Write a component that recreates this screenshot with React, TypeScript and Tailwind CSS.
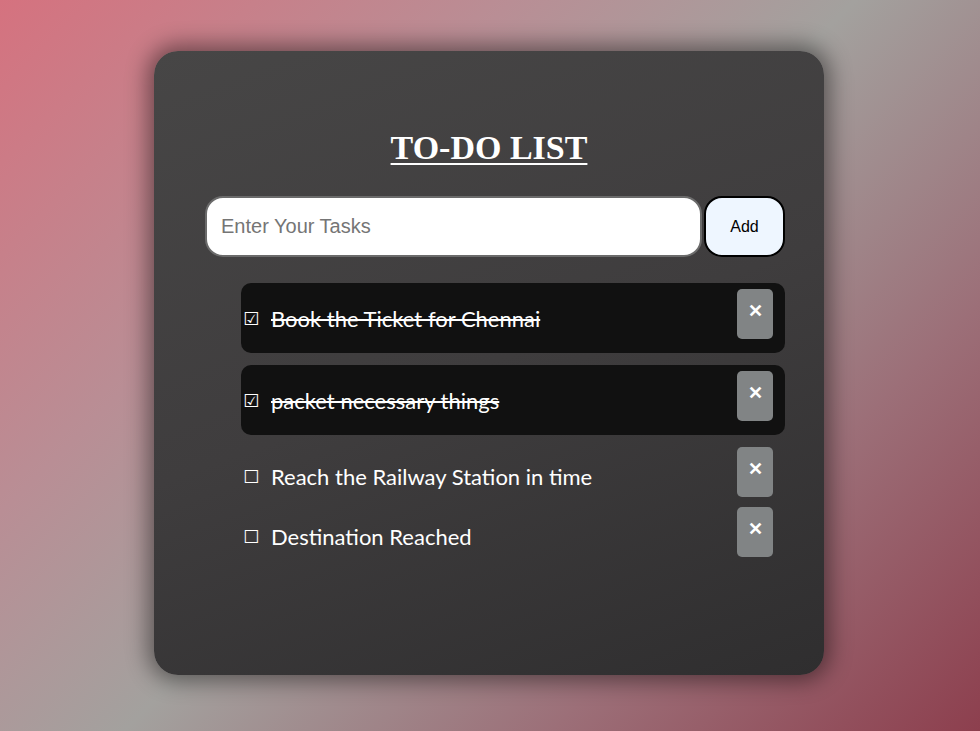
import { useState } from 'react';

interface Task {
  id: number;
  text: string;
  done: boolean;
}

const initialTasks: Task[] = [
  { id: 1, text: 'Book the Ticket for Chennai', done: true },
  { id: 2, text: 'packet necessary things', done: true },
  { id: 3, text: 'Reach the Railway Station in time', done: false },
  { id: 4, text: 'Destination Reached', done: false },
];

export default function App() {
  const [tasks, setTasks] = useState<Task[]>(initialTasks);
  const [value, setValue] = useState('');

  const addTask = () => {
    if (!value.trim()) return;
    setTasks([...tasks, { id: Date.now(), text: value.trim(), done: false }]);
    setValue('');
  };

  const toggle = (id: number) =>
    setTasks(tasks.map((t) => (t.id === id ? { ...t, done: !t.done } : t)));

  const remove = (id: number) => setTasks(tasks.filter((t) => t.id !== id));

  return (
    <div className="h-[731px] w-full overflow-hidden bg-[linear-gradient(135deg,#d5727f_0%,#b98e95_30%,#a3a19e_50%,#9c6f78_75%,#8d3f4e_100%)] pt-[51px]">
      <div className="ml-[154px] h-[624px] w-[670px] rounded-[24px] bg-[linear-gradient(160deg,#474646_0%,#3f3d3e_50%,#2f2e2f_100%)] px-[51px] pt-[78px] shadow-[0_0_22px_6px_rgba(0,0,0,0.45)]">
        {/* Header */}
        <h1 className="text-center font-['Liberation_Serif',serif] text-[34px] font-bold leading-[38px] text-white underline decoration-2 underline-offset-[4px]">
          TO-DO LIST
        </h1>

        {/* Input row */}
        <div className="mt-[29px] flex w-[580px] gap-[2px]">
          <input
            value={value}
            onChange={(e) => setValue(e.target.value)}
            placeholder="Enter Your Tasks"
            className="h-[61px] w-[497px] rounded-[18px] border-2 border-[#6b6b6b] bg-white px-[14px] font-['Liberation_Sans',Arial,sans-serif] text-[20px] text-black outline-none placeholder:text-[#757575]"
          />
          <button
            onClick={addTask}
            className="h-[61px] w-[81px] rounded-[18px] border-2 border-black bg-[#eef6ff] font-['Liberation_Sans',Arial,sans-serif] text-[16px] text-black"
          >
            Add
          </button>
        </div>

        {/* Tasks */}
        <ul className="mt-[26px] w-[580px] pl-[36px]">
          {tasks.map((t) => (
            <li
              key={t.id}
              className={
                t.done
                  ? 'mb-[12px] flex items-start justify-between rounded-[10px] bg-[#111111] pb-[14px] pl-[2px] pr-[12px] pt-[6px]'
                  : 'flex items-start justify-between pb-[10px] pl-[2px] pr-[12px]'
              }
            >
              <div
                onClick={() => toggle(t.id)}
                className="mt-[15px] flex cursor-pointer items-center text-white"
              >
                <span className="w-[28px] font-['DejaVu_Sans',sans-serif] text-[18px] leading-[30px]">
                  {t.done ? '☑' : '☐'}
                </span>
                <span
                  className={`font-['Lato','Open_Sans',sans-serif] text-[22px] leading-[30px] ${
                    t.done ? 'line-through decoration-2' : ''
                  }`}
                >
                  {t.text}
                </span>
              </div>
              <button
                onClick={() => remove(t.id)}
                className="flex h-[50px] w-[36px] items-start justify-center rounded-[5px] bg-[#818485] pt-[12px] font-['Liberation_Sans',Arial,sans-serif] text-[18px] font-bold leading-[20px] text-white"
              >
                ✕
              </button>
            </li>
          ))}
        </ul>
      </div>
    </div>
  );
}
